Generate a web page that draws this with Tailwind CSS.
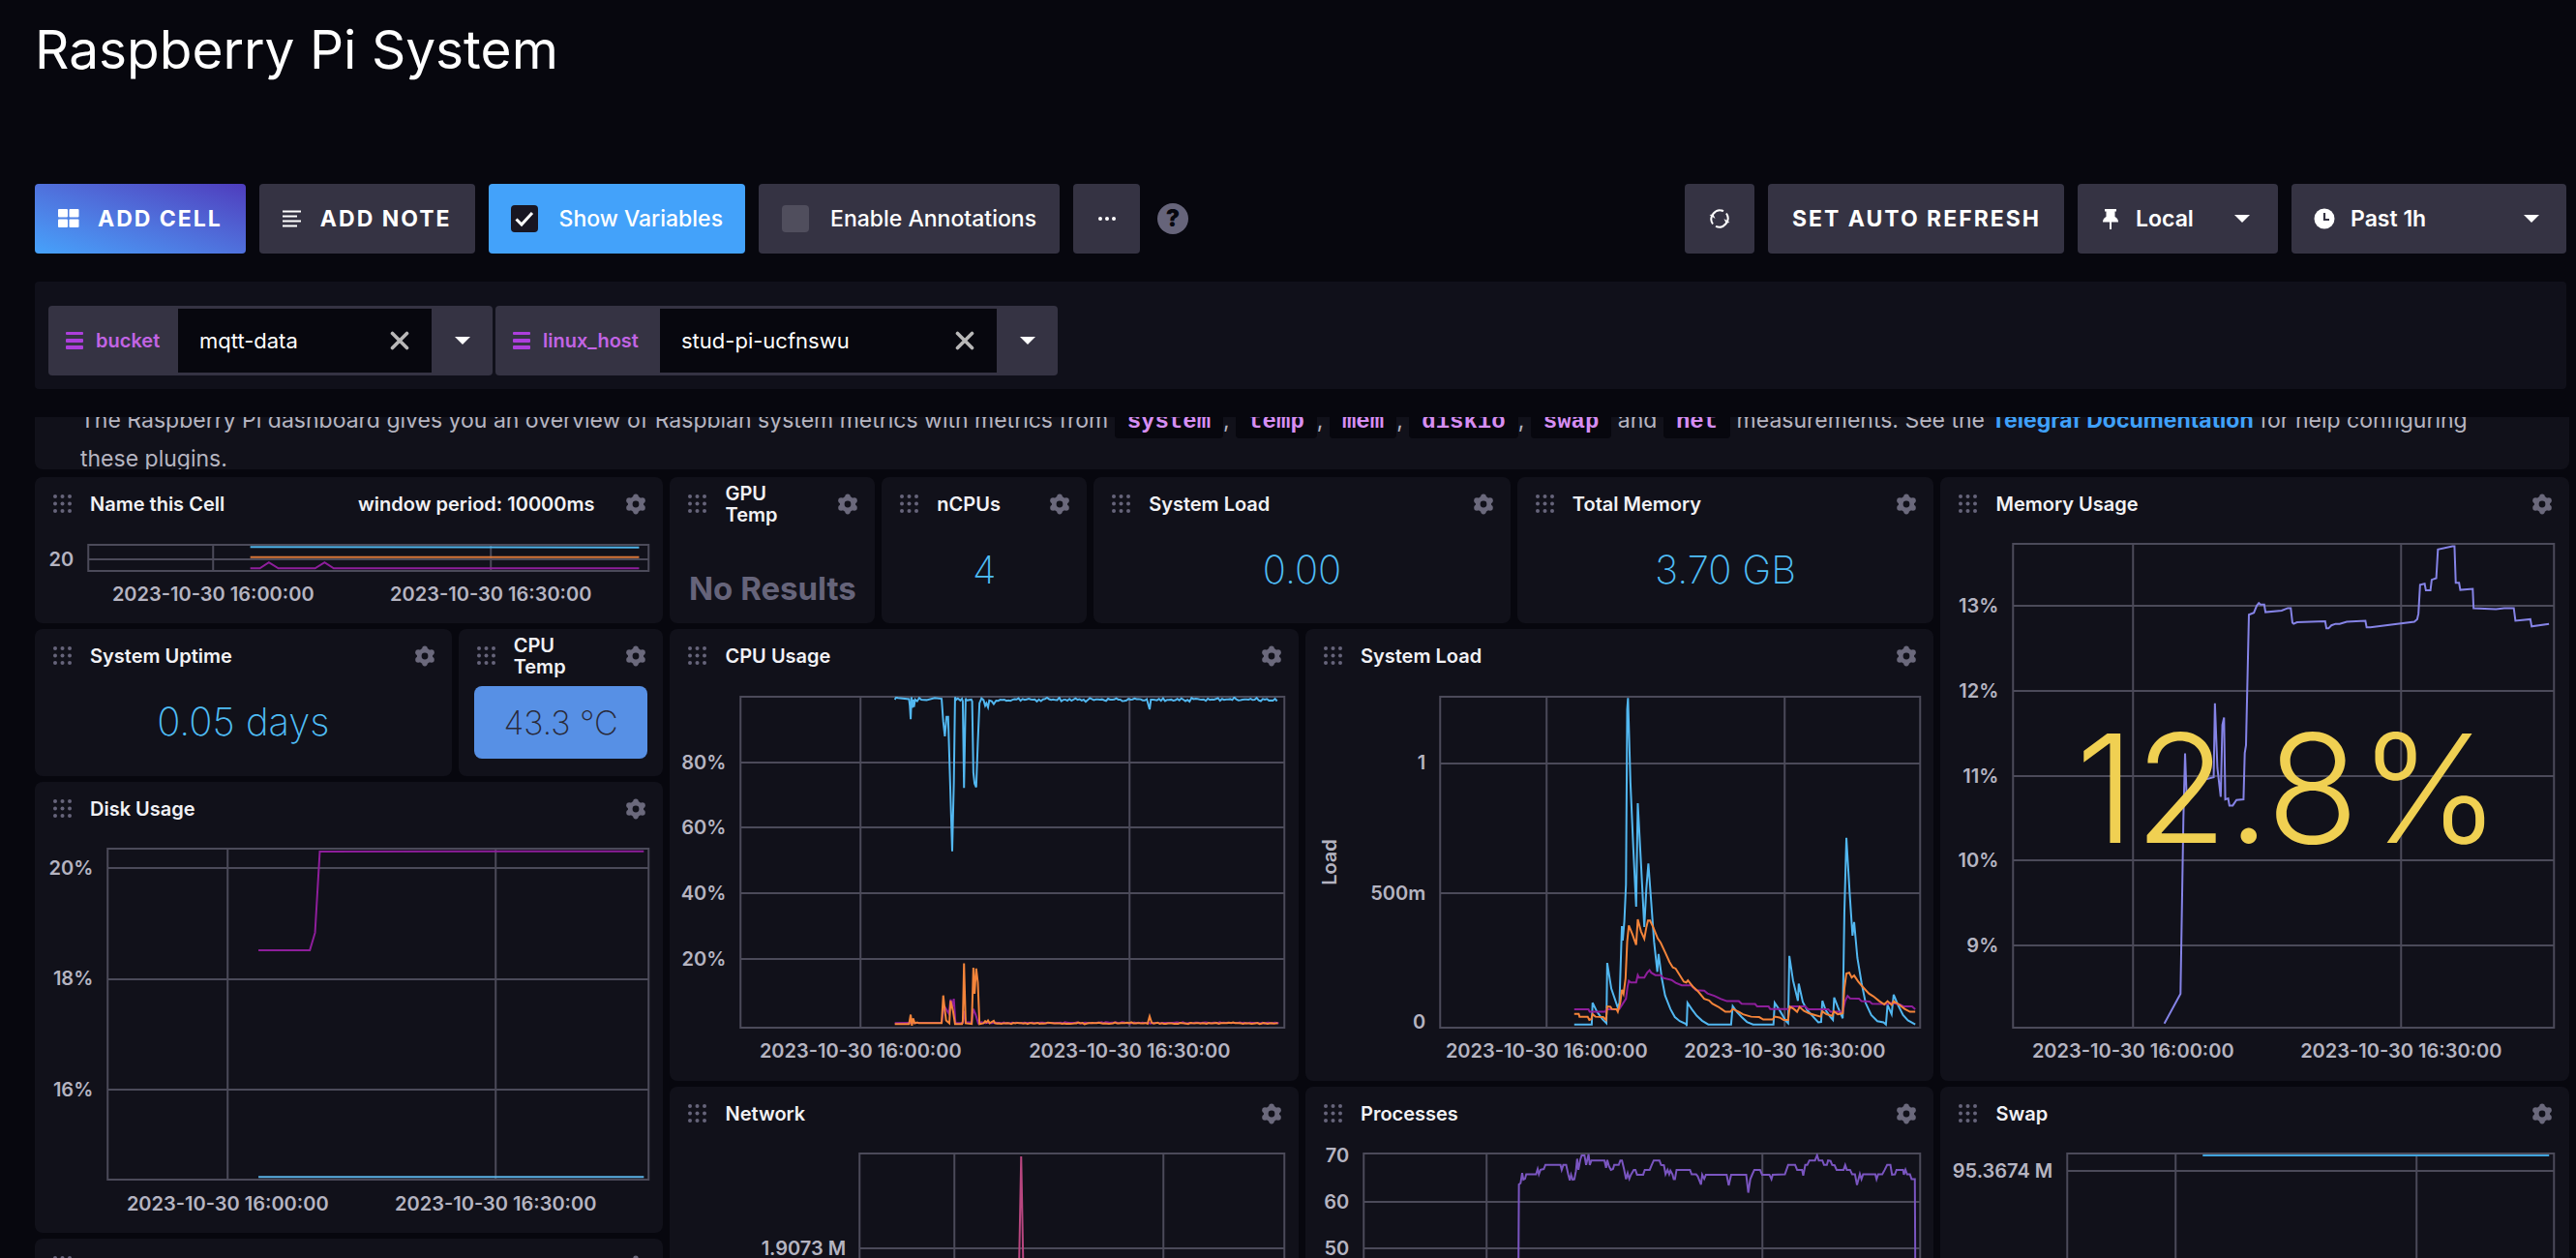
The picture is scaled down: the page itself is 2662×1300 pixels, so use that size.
<!DOCTYPE html>
<html lang="en">
<head>
<meta charset="utf-8">
<title>Raspberry Pi System</title>
<script src="https://cdn.jsdelivr.net/npm/@tailwindcss/browser@4"></script>
</head>
<body class="flex h-screen flex-col overflow-hidden bg-[#07070e] font-['Inter',sans-serif] text-white">

<svg class="hidden" aria-hidden="true">
  <symbol id="dots" viewBox="0 0 19 19">
    <g fill="#66647a"><circle cx="2" cy="2" r="2"/><circle cx="9.5" cy="2" r="2"/><circle cx="17" cy="2" r="2"/><circle cx="2" cy="9.5" r="2"/><circle cx="9.5" cy="9.5" r="2"/><circle cx="17" cy="9.5" r="2"/><circle cx="2" cy="17" r="2"/><circle cx="9.5" cy="17" r="2"/><circle cx="17" cy="17" r="2"/></g>
  </symbol>
  <symbol id="gear" viewBox="0 0 22 22">
    <g fill="#6b697c"><circle cx="11" cy="11" r="8.2"/><circle cx="11" cy="3.4" r="2.8"/><circle cx="11" cy="18.6" r="2.8"/><circle cx="4.2" cy="7.2" r="3"/><circle cx="17.8" cy="7.2" r="3"/><circle cx="4.2" cy="14.8" r="3"/><circle cx="17.8" cy="14.8" r="3"/></g>
    <circle cx="11" cy="11" r="3.4" fill="#11111a"/>
  </symbol>
  <symbol id="caret" viewBox="0 0 16 8"><path d="M0 0H16L8 8Z" fill="#fff"/></symbol>
  <symbol id="bars" viewBox="0 0 18 18"><g fill="#ad3fdc"><rect width="18" height="3" rx="1"/><rect y="7" width="18" height="4" rx="1"/><rect y="14" width="18" height="4" rx="1"/></g></symbol>
  <symbol id="cross" viewBox="0 0 20 20"><path d="M2.5 2.5L17.5 17.5M17.5 2.5L2.5 17.5" stroke="#b9b8b8" stroke-width="3.6" stroke-linecap="round"/></symbol>
</svg>

<header class="flex h-[190px] shrink-0 items-start px-9 pt-[17px]">
  <h1 class="text-[55px] leading-[68px]">Raspberry Pi System</h1>
</header>

<div class="flex shrink-0 items-center justify-between pl-9 pr-[10px] text-[23px]">
  <div class="flex items-center gap-[14px]">
    <button class="flex h-[72px] items-center gap-[19px] rounded bg-linear-to-tr from-[#45a2fb] to-[#4e3cbd] px-6 font-bold tracking-[2px]">
      <svg class="h-[20px] w-[22px]" viewBox="0 0 22 20" fill="#fff"><rect width="10" height="8.5" rx="1"/><rect x="11.5" width="10" height="8.5" rx="1"/><rect y="10.5" width="10" height="8.5" rx="1"/><rect x="11.5" y="10.5" width="10" height="8.5" rx="1"/></svg>ADD CELL
    </button>
    <button class="flex h-[72px] items-center gap-[20px] rounded bg-[#353343] px-6 font-bold tracking-[2px]">
      <svg class="h-[18px] w-[19px]" viewBox="0 0 19 18" stroke="#fff" stroke-width="2"><path d="M0 1.5H19M0 6.5H15M0 11.5H19M0 16.5H15"/></svg>ADD NOTE
    </button>
    <label class="flex h-[72px] items-center gap-[22px] rounded bg-[#43a2fa] px-[23px] font-medium">
      <span class="grid size-[28px] place-items-center">
        <input type="checkbox" checked class="size-[28px] appearance-none rounded bg-[#181622] [grid-area:1/1]">
        <svg class="pointer-events-none size-[20px] [grid-area:1/1]" viewBox="0 0 20 20" fill="none" stroke="#fff" stroke-width="3"><path d="M1.5 10.5L7 16L18 4"/></svg>
      </span>Show Variables
    </label>
    <label class="flex h-[72px] items-center gap-[22px] rounded bg-[#353343] px-6 font-medium">
      <input type="checkbox" class="size-[28px] appearance-none rounded bg-[#504e5d]">Enable Annotations
    </label>
    <button class="grid h-[72px] w-[69px] place-items-center rounded bg-[#353343]" aria-label="More">
      <svg class="h-[4px] w-[18px]" viewBox="0 0 18 4" fill="#fff"><circle cx="2" cy="2" r="2"/><circle cx="9" cy="2" r="2"/><circle cx="16" cy="2" r="2"/></svg>
    </button>
    <button class="ml-1 grid size-[32px] place-items-center rounded-full bg-[#66647a] text-[24px] leading-none font-black text-[#07070e]">?</button>
  </div>
  <div class="flex items-center gap-[14px]">
    <button class="grid size-[72px] place-items-center rounded bg-[#353343]" aria-label="Refresh">
      <svg class="size-[22px]" viewBox="0 0 22 22" fill="none" stroke="#fff" stroke-width="2"><path d="M4 16.500A9 9 0 0 1 15 3.200M18 5.500A9 9 0 0 1 7 18.800"/><path fill="#fff" stroke="none" d="M0.500 7L4.500 6.500L6.500 11Z M21.500 15L17.500 15.500L15.500 11Z"/></svg>
    </button>
    <button class="h-[72px] rounded bg-[#353343] pl-[25px] pr-[24px] font-bold tracking-[2px]">SET AUTO REFRESH</button>
    <div class="relative">
      <select aria-label="Time zone" class="h-[72px] w-[207px] appearance-none rounded bg-[#353343] pl-[60px] font-semibold"><option>Local</option></select>
      <svg class="pointer-events-none absolute top-[26px] left-[26px] h-[21px] w-[16px]" viewBox="0 0 16 21" fill="#fff"><path d="M2 0H14V2.5H12.5V8Q16 9.5 16 13.5H0Q0 9.5 3.5 8V2.5H2Z"/><rect x="7" y="13" width="2" height="8"/></svg>
      <svg class="pointer-events-none absolute top-[32px] right-[29px] h-[8px] w-[16px]"><use href="#caret"/></svg>
    </div>
    <div class="relative">
      <select aria-label="Time range" class="h-[72px] w-[284px] appearance-none rounded bg-[#353343] pl-[61px] font-semibold"><option>Past 1h</option></select>
      <svg class="pointer-events-none absolute top-[25px] left-[23px] size-[22px]" viewBox="0 0 22 22"><circle cx="11" cy="11" r="10.5" fill="#fff"/><path d="M11 5V12H16" fill="none" stroke="#353343" stroke-width="2.2"/></svg>
      <svg class="pointer-events-none absolute top-[32px] right-[28px] h-[8px] w-[16px]"><use href="#caret"/></svg>
    </div>
  </div>
</div>

<div class="mt-[29px] mr-[10px] ml-9 flex h-[111px] shrink-0 gap-[3px] rounded bg-[#10101a] pt-[25px] pl-[14px]">
  <div class="flex h-[72px] w-[459px] items-center rounded bg-[#353343]">
    <label for="bucket" class="flex w-[134px] items-center gap-[13px] pl-[18px] text-[20px] font-semibold text-[#c264e4]"><svg class="size-[18px]"><use href="#bars"/></svg>bucket</label>
    <div class="flex h-[66px] flex-1 items-center bg-[#07070e] pr-[23px] pl-[22px]">
      <input id="bucket" value="mqtt-data" class="w-0 flex-1 text-[22px] outline-none">
      <button aria-label="Clear bucket"><svg class="size-[20px]"><use href="#cross"/></svg></button>
    </div>
    <button class="grid h-full w-[63px] place-items-center" aria-label="Open bucket list"><svg class="h-[8px] w-[16px]"><use href="#caret"/></svg></button>
  </div>
  <div class="flex h-[72px] w-[581px] items-center rounded bg-[#353343]">
    <label for="host" class="flex w-[170px] items-center gap-[13px] pl-[18px] text-[20px] font-semibold text-[#c264e4]"><svg class="size-[18px]"><use href="#bars"/></svg>linux_host</label>
    <div class="flex h-[66px] flex-1 items-center bg-[#07070e] pr-[23px] pl-[22px]">
      <input id="host" value="stud-pi-ucfnswu" class="w-0 flex-1 text-[22px] outline-none">
      <button aria-label="Clear host"><svg class="size-[20px]"><use href="#cross"/></svg></button>
    </div>
    <button class="grid h-full w-[63px] place-items-center" aria-label="Open host list"><svg class="h-[8px] w-[16px]"><use href="#caret"/></svg></button>
  </div>
</div>

<main class="mt-[29px] min-h-0 flex-1 overflow-hidden pr-[7px] pl-9">
  <section class="flex h-[54px] flex-col justify-end overflow-hidden rounded-b-lg bg-[#11111a] px-[47px]">
    <p class="-mb-[8px] text-[23px] leading-[38px] text-[#b6b5c1]">The Raspberry Pi dashboard gives you an overview of Raspbian system metrics with metrics from <code class="rounded-sm bg-[#07070e] px-[13px] py-1 font-['Liberation_Mono',monospace] text-[24px] font-bold text-[#d68ef2]">system</code>, <code class="rounded-sm bg-[#07070e] px-[13px] py-1 font-['Liberation_Mono',monospace] text-[24px] font-bold text-[#d68ef2]">temp</code>, <code class="rounded-sm bg-[#07070e] px-[13px] py-1 font-['Liberation_Mono',monospace] text-[24px] font-bold text-[#d68ef2]">mem</code>, <code class="rounded-sm bg-[#07070e] px-[13px] py-1 font-['Liberation_Mono',monospace] text-[24px] font-bold text-[#d68ef2]">diskio</code>, <code class="rounded-sm bg-[#07070e] px-[13px] py-1 font-['Liberation_Mono',monospace] text-[24px] font-bold text-[#d68ef2]">swap</code> and <code class="rounded-sm bg-[#07070e] px-[13px] py-1 font-['Liberation_Mono',monospace] text-[24px] font-bold text-[#d68ef2]">net</code> measurements. See the <a href="#" class="font-bold text-[#3fa1fa]">Telegraf Documentation</a> for help configuring these plugins.</p>
  </section>

  <div class="mt-2 grid grid-cols-12 grid-rows-[151px_152px_151px_152px_151px_151px_151px] gap-x-[7px] gap-y-[6px] text-[20px] leading-[22px] font-semibold text-[#f1f1f5]">

    <section class="col-span-3 col-start-1 row-start-1 grid rounded-lg bg-[#11111a]">
      <div class="flex h-[55px] items-center gap-[19px] pr-[17px] pl-[19px] [grid-area:1/1]"><svg class="size-[19px]"><use href="#dots"/></svg><h2 class="flex-1">Name this Cell</h2><span class="mr-[13px]">window period: 10000ms</span><button aria-label="Configure"><svg class="size-[22px]"><use href="#gear"/></svg></button></div>
      <svg class="h-full w-full [grid-area:1/1]" viewBox="0 0 649 151" preserveAspectRatio="xMidYMin meet" fill="#b5b4c1">
        <path class="fill-none stroke-[#4b4a59] stroke-2" d="M55 70H634V97H55ZM184 70V97M471 70V97M55 85H634"/>
        <svg x="55" y="70" width="579" height="27" viewBox="205 488 1297 82" preserveAspectRatio="none" fill="none" stroke-width="2">
          <path vector-effect="non-scaling-stroke" stroke="#4fb3e8" d="M580 495L1480 496"/>
          <path vector-effect="non-scaling-stroke" stroke="#d9773a" d="M580 527H1480"/>
          <path vector-effect="non-scaling-stroke" stroke="#8e1e9b" d="M580 562H602L623 543L645 562H730L752 543L773 562H1480"/>
        </svg>
        <text x="40" y="92" text-anchor="end">20</text>
        <text x="184" y="128" text-anchor="middle">2023-10-30 16:00:00</text><text x="471" y="128" text-anchor="middle">2023-10-30 16:30:00</text>
      </svg>
    </section>

    <section class="col-span-1 col-start-4 row-start-1 flex flex-col rounded-lg bg-[#11111a]">
      <div class="flex h-[55px] shrink-0 items-center gap-[19px] pr-[17px] pl-[19px]"><svg class="size-[19px]"><use href="#dots"/></svg><h2 class="flex-1">GPU<br>Temp</h2><button aria-label="Configure"><svg class="size-[22px]"><use href="#gear"/></svg></button></div>
      <p class="mt-[40px] text-center text-[33px] leading-[40px] font-bold whitespace-nowrap text-[#66647a]">No Results</p>
    </section>

    <section class="col-span-1 col-start-5 row-start-1 flex flex-col rounded-lg bg-[#11111a]">
      <div class="flex h-[55px] shrink-0 items-center gap-[19px] pr-[17px] pl-[19px]"><svg class="size-[19px]"><use href="#dots"/></svg><h2 class="flex-1">nCPUs</h2><button aria-label="Configure"><svg class="size-[22px]"><use href="#gear"/></svg></button></div>
      <p class="mt-[16px] text-center text-[40px] leading-[50px] font-extralight text-[#4fbdf5]">4</p>
    </section>

    <section class="col-span-2 col-start-6 row-start-1 flex flex-col rounded-lg bg-[#11111a]">
      <div class="flex h-[55px] shrink-0 items-center gap-[19px] pr-[17px] pl-[19px]"><svg class="size-[19px]"><use href="#dots"/></svg><h2 class="flex-1">System Load</h2><button aria-label="Configure"><svg class="size-[22px]"><use href="#gear"/></svg></button></div>
      <p class="mt-[16px] text-center text-[40px] leading-[50px] font-extralight text-[#4fbdf5]">0.00</p>
    </section>

    <section class="col-span-2 col-start-8 row-start-1 flex flex-col rounded-lg bg-[#11111a]">
      <div class="flex h-[55px] shrink-0 items-center gap-[19px] pr-[17px] pl-[19px]"><svg class="size-[19px]"><use href="#dots"/></svg><h2 class="flex-1">Total Memory</h2><button aria-label="Configure"><svg class="size-[22px]"><use href="#gear"/></svg></button></div>
      <p class="mt-[16px] text-center text-[40px] leading-[50px] font-extralight text-[#4fbdf5]">3.70 GB</p>
    </section>

    <section class="col-span-3 col-start-10 row-span-4 row-start-1 grid rounded-lg bg-[#11111a]">
      <div class="flex h-[55px] items-center gap-[19px] pr-[17px] pl-[19px] [grid-area:1/1]"><svg class="size-[19px]"><use href="#dots"/></svg><h2 class="flex-1">Memory Usage</h2><button aria-label="Configure"><svg class="size-[22px]"><use href="#gear"/></svg></button></div>
      <svg class="h-full w-full [grid-area:1/1]" viewBox="0 0 649 624" preserveAspectRatio="xMidYMin meet" fill="#b5b4c1">
        <path class="fill-none stroke-[#4b4a59] stroke-2" d="M75 69H634V569H75ZM199 69V569M476 69V569M75 133H634M75 221H634M75 309H634M75 396H634M75 484H634"/>
        <svg x="75" y="69" width="559" height="500" viewBox="210 157 1305 956" preserveAspectRatio="none" fill="none" stroke="#8583e6" stroke-width="2">
          <path vector-effect="non-scaling-stroke" d="M575 1105L614 1046L621 700L625 571L629 660L638 645L650 629L665 624L680 621L694 618L697 472L703 600L711 657L715 515L719 500L722 662L729 660L732 674H740L749 663L766 662L769 570L772 555L779 297L791 293L798 279L803 274L807 277H816L819 292L858 289L873 284H880L884 313L887 315L895 312L963 310L966 324H971L978 318L988 315H998L1015 311L1060 309L1063 322H1072L1178 311L1185 306L1188 295L1192 238L1203 236L1206 249H1217L1220 228L1231 225L1235 168L1270 162H1275L1278 234H1286L1289 248L1319 246L1321 284L1375 286L1395 284H1418L1422 309L1458 306L1461 320L1503 315"/>
        </svg>
        <g text-anchor="end"><text x="60" y="140">13%</text><text x="60" y="228">12%</text><text x="60" y="316">11%</text><text x="60" y="403">10%</text><text x="60" y="491">9%</text></g>
        <text x="199" y="600" text-anchor="middle">2023-10-30 16:00:00</text><text x="476" y="600" text-anchor="middle">2023-10-30 16:30:00</text>
        <text x="359" y="378" text-anchor="middle" class="fill-[#f0d052] text-[156px] font-light">12.8%</text>
      </svg>
    </section>

    <section class="col-span-2 col-start-1 row-start-2 flex flex-col rounded-lg bg-[#11111a]">
      <div class="flex h-[55px] shrink-0 items-center gap-[19px] pr-[17px] pl-[19px]"><svg class="size-[19px]"><use href="#dots"/></svg><h2 class="flex-1">System Uptime</h2><button aria-label="Configure"><svg class="size-[22px]"><use href="#gear"/></svg></button></div>
      <p class="mt-[16px] text-center text-[40px] leading-[50px] font-extralight text-[#4fbdf5]">0.05 days</p>
    </section>

    <section class="col-span-1 col-start-3 row-start-2 flex flex-col rounded-lg bg-[#11111a]">
      <div class="flex h-[55px] shrink-0 items-center gap-[19px] pr-[17px] pl-[19px]"><svg class="size-[19px]"><use href="#dots"/></svg><h2 class="flex-1">CPU<br>Temp</h2><button aria-label="Configure"><svg class="size-[22px]"><use href="#gear"/></svg></button></div>
      <p class="mx-4 mt-1 h-[75px] rounded-lg bg-[#5790e5] text-center text-[34px] leading-[75px] font-extralight whitespace-nowrap text-[#292938]">43.3 °C</p>
    </section>

    <section class="col-span-3 col-start-1 row-span-3 row-start-3 grid rounded-lg bg-[#11111a]">
      <div class="flex h-[55px] items-center gap-[19px] pr-[17px] pl-[19px] [grid-area:1/1]"><svg class="size-[19px]"><use href="#dots"/></svg><h2 class="flex-1">Disk Usage</h2><button aria-label="Configure"><svg class="size-[22px]"><use href="#gear"/></svg></button></div>
      <svg class="h-full w-full [grid-area:1/1]" viewBox="0 0 649 466" preserveAspectRatio="xMidYMin meet" fill="#b5b4c1">
        <path class="fill-none stroke-[#4b4a59] stroke-2" d="M75 69H634V411H75ZM199 69V411M476 69V411M75 89H634M75 204H634M75 318H634"/>
        <svg x="75" y="69" width="559" height="342" viewBox="249 232 1252 1027" preserveAspectRatio="none" fill="none" stroke-width="2">
          <path vector-effect="non-scaling-stroke" stroke="#8e1e9b" d="M598 547H717L729 493L740 241L1490 240"/>
          <path vector-effect="non-scaling-stroke" stroke="#5bb2e6" d="M598 1251H1490"/>
        </svg>
        <g text-anchor="end"><text x="60" y="96">20%</text><text x="60" y="210">18%</text><text x="60" y="325">16%</text></g>
        <text x="199" y="443" text-anchor="middle">2023-10-30 16:00:00</text><text x="476" y="443" text-anchor="middle">2023-10-30 16:30:00</text>
      </svg>
    </section>

    <section class="col-span-3 col-start-4 row-span-3 row-start-2 grid rounded-lg bg-[#11111a]">
      <div class="flex h-[55px] items-center gap-[19px] pr-[17px] pl-[19px] [grid-area:1/1]"><svg class="size-[19px]"><use href="#dots"/></svg><h2 class="flex-1">CPU Usage</h2><button aria-label="Configure"><svg class="size-[22px]"><use href="#gear"/></svg></button></div>
      <svg class="h-full w-full [grid-area:1/1]" viewBox="0 0 649 467" preserveAspectRatio="xMidYMin meet" fill="#b5b4c1">
        <path class="fill-none stroke-[#4b4a59] stroke-2" d="M73 70H635V412H73ZM197 70V412M475 70V412M73 138H635M73 205H635M73 273H635M73 341H635"/>
        <svg x="73" y="70" width="562" height="342" viewBox="178 189 1336 812" preserveAspectRatio="none" fill="none" stroke-width="2">
          <polyline vector-effect="non-scaling-stroke" stroke="#8e1e9b" data-from="770" data-base="989" data-amp="2" points="557,990 592,989 672,989 676,960 680,950 690,967 694,932 699,945 702,930 706,990 724,989 727,960 731,988 746,988 750,955 756,970 762,990"/>
          <polyline vector-effect="non-scaling-stroke" stroke="#f4843a" data-from="808" data-base="990" data-amp="3" data-dip="1183,973" points="557,992 592,992 596,969 599,996 602,978 606,990 612,988 616,990 672,990 676,922 679,950 683,983 691,990 694,935 700,960 705,992 722,992 724,985 727,843 731,990 746,992 750,854 753,918 757,856 761,890 765,992 775,990 779,985 782,988 786,983 790,990 800,984 803,990"/>
          <polyline vector-effect="non-scaling-stroke" stroke="#52b7f0" data-from="806" data-base="196" data-amp="6" data-dip="1183,220" points="557,196 560,191 565,192 592,195 594,212 596,244 598,190 600,216 602,196 604,214 607,196 612,200 617,192 622,196 635,197 655,192 672,194 676,250 680,286 684,238 688,238 698,568 702,400 705,190 708,196 712,193 718,198 722,194 724,200 727,413 731,193 733,198 745,196 747,200 750,375 753,402 757,411 761,300 765,205 770,193 775,197 779,211 782,205 786,215 789,198 795,200 800,207"/>
        </svg>
        <g text-anchor="end"><text x="58" y="145">80%</text><text x="58" y="212">60%</text><text x="58" y="280">40%</text><text x="58" y="348">20%</text></g>
        <text x="197" y="443" text-anchor="middle">2023-10-30 16:00:00</text><text x="475" y="443" text-anchor="middle">2023-10-30 16:30:00</text>
      </svg>
    </section>

    <section class="col-span-3 col-start-7 row-span-3 row-start-2 grid rounded-lg bg-[#11111a]">
      <div class="flex h-[55px] items-center gap-[19px] pr-[17px] pl-[19px] [grid-area:1/1]"><svg class="size-[19px]"><use href="#dots"/></svg><h2 class="flex-1">System Load</h2><button aria-label="Configure"><svg class="size-[22px]"><use href="#gear"/></svg></button></div>
      <svg class="h-full w-full [grid-area:1/1]" viewBox="0 0 649 467" preserveAspectRatio="xMidYMin meet" fill="#b5b4c1">
        <path class="fill-none stroke-[#4b4a59] stroke-2" d="M139 70H635V412H139ZM249 70V412M495 70V412M139 139H635M139 273H635"/>
        <svg x="139" y="70" width="496" height="342" viewBox="352 189 1178 812" preserveAspectRatio="none" fill="none" stroke-width="2">
          <polyline vector-effect="non-scaling-stroke" stroke="#52b7f0" points="681,993 724,993 726,940 737,962 750,980 760,990 762,842 772,905 788,952 792,940 798,752 800,787 804,740 808,650 811,220 813,192 819,400 826,560 833,704 837,450 845,600 853,754 858,660 863,598 869,680 877,790 885,864 888,820 896,880 904,922 917,955 928,975 940,985 956,992 957,997 959,940 970,956 982,972 995,984 1010,993 1066,993 1070,948 1080,962 1092,975 1105,987 1120,993 1170,993 1173,940 1185,958 1200,984 1206,990 1209,825 1218,885 1230,935 1232,893 1242,938 1252,957 1270,977 1280,988 1287,987 1290,935 1298,958 1310,975 1316,982 1319,927 1328,950 1340,978 1344,720 1349,535 1357,670 1364,775 1368,742 1376,830 1386,890 1396,940 1410,970 1425,985 1440,988 1446,993 1450,945 1460,968 1465,920 1475,944 1488,970 1500,983 1518,993"/>
          <polyline vector-effect="non-scaling-stroke" stroke="#8e1e9b" points="681,956 716,956 719,962 757,962 760,956 786,956 792,955 808,930 812,900 815,886 820,890 833,890 837,872 840,878 853,878 860,866 866,860 870,866 880,872 893,872 900,879 920,884 930,891 945,897 968,897 980,909 1000,910 1008,917 1025,923 1040,930 1056,936 1085,936 1092,942 1125,943 1130,949 1158,949 1162,955 1210,955 1215,949 1248,949 1255,956 1305,956 1310,962 1340,962 1346,935 1352,923 1358,929 1380,930 1386,936 1406,937 1412,942 1450,943 1460,940 1480,944 1490,949 1510,949 1518,956"/>
          <polyline vector-effect="non-scaling-stroke" stroke="#f4843a" points="681,967 692,967 694,974 714,974 718,982 723,980 726,968 733,974 752,975 759,982 762,949 770,950 773,955 785,956 788,962 794,940 798,908 802,918 807,880 811,790 815,750 824,772 833,798 837,735 845,765 853,783 858,755 862,738 867,738 875,755 886,782 893,792 905,818 915,840 923,853 930,856 940,872 950,888 956,890 960,885 972,900 985,912 1000,930 1012,934 1020,942 1035,950 1052,962 1064,962 1070,955 1085,962 1095,968 1115,974 1135,975 1145,981 1168,981 1173,974 1185,976 1195,982 1206,982 1210,949 1220,955 1228,962 1234,950 1245,960 1258,966 1272,970 1286,974 1290,961 1300,968 1314,972 1318,961 1328,968 1340,966 1344,905 1349,868 1356,866 1362,878 1368,873 1378,888 1390,902 1404,917 1415,924 1430,936 1442,944 1450,936 1460,945 1465,936 1478,944 1492,955 1505,962 1518,962"/>
        </svg>
        <g text-anchor="end"><text x="124" y="145">1</text><text x="124" y="280">500m</text><text x="124" y="413">0</text></g>
        <text x="249" y="443" text-anchor="middle">2023-10-30 16:00:00</text><text x="495" y="443" text-anchor="middle">2023-10-30 16:30:00</text>
        <text transform="translate(32 241) rotate(-90)" text-anchor="middle">Load</text>
      </svg>
    </section>

    <section class="col-span-3 col-start-4 row-span-3 row-start-5 grid rounded-lg bg-[#11111a]">
      <div class="flex h-[55px] items-center gap-[19px] pr-[17px] pl-[19px] [grid-area:1/1]"><svg class="size-[19px]"><use href="#dots"/></svg><h2 class="flex-1">Network</h2><button aria-label="Configure"><svg class="size-[22px]"><use href="#gear"/></svg></button></div>
      <svg class="h-full w-full [grid-area:1/1]" viewBox="0 0 649 465" preserveAspectRatio="xMidYMin meet" fill="#b5b4c1">
        <path class="fill-none stroke-[#4b4a59] stroke-2" d="M196 69H635V411H196ZM294 69V411M510 69V411M196 167H635"/>
        <path class="fill-none stroke-[#b8467f] stroke-2" d="M361 177L363 72L365 177"/>
        <text x="182" y="174" text-anchor="end">1.9073 M</text>
      </svg>
    </section>

    <section class="col-span-3 col-start-7 row-span-3 row-start-5 grid rounded-lg bg-[#11111a]">
      <div class="flex h-[55px] items-center gap-[19px] pr-[17px] pl-[19px] [grid-area:1/1]"><svg class="size-[19px]"><use href="#dots"/></svg><h2 class="flex-1">Processes</h2><button aria-label="Configure"><svg class="size-[22px]"><use href="#gear"/></svg></button></div>
      <svg class="h-full w-full [grid-area:1/1]" viewBox="0 0 649 465" preserveAspectRatio="xMidYMin meet" fill="#b5b4c1">
        <path class="fill-none stroke-[#4b4a59] stroke-2" d="M60 69H635V411H60ZM187 69V411M472 69V411M60 119H635M60 167H635"/>
        <svg x="60" y="69" width="575" height="108" viewBox="164 1312 1366 256" preserveAspectRatio="none" fill="none" stroke="#7a55c0" stroke-width="2">
          <polyline vector-effect="non-scaling-stroke" points="544,1568 545,1388 549,1385 553,1360 556,1376 560,1374 563,1363 587,1363 591,1350 594,1363 598,1352 606,1350 610,1340 647,1340 650,1352 654,1340 661,1340 666,1363 670,1378 673,1364 677,1376 681,1375 685,1355 688,1325 691,1352 696,1326 699,1317 706,1317 710,1340 716,1314 719,1340 723,1329 755,1329 759,1347 762,1328 766,1343 771,1352 776,1350 779,1340 790,1340 794,1329 798,1329 803,1350 808,1375 812,1360 816,1374 820,1364 827,1352 831,1352 835,1364 850,1364 854,1352 866,1352 871,1340 876,1329 890,1329 894,1340 901,1341 905,1363 910,1352 914,1363 917,1354 922,1363 925,1375 928,1375 932,1352 965,1352 969,1363 980,1363 984,1368 992,1388 995,1364 1000,1374 1004,1364 1055,1364 1060,1390 1066,1364 1103,1364 1108,1408 1113,1375 1118,1363 1123,1352 1137,1352 1142,1364 1160,1364 1165,1375 1168,1364 1198,1363 1206,1340 1223,1340 1228,1352 1240,1352 1243,1366 1248,1340 1253,1340 1258,1329 1272,1329 1277,1316 1281,1329 1290,1329 1294,1340 1301,1340 1304,1329 1310,1330 1314,1340 1320,1341 1325,1352 1342,1352 1346,1340 1350,1352 1358,1352 1363,1363 1370,1363 1375,1389 1382,1362 1386,1375 1390,1363 1420,1363 1423,1375 1427,1363 1437,1363 1443,1352 1449,1340 1457,1340 1461,1364 1468,1363 1472,1352 1488,1352 1490,1364 1494,1352 1498,1363 1505,1363 1509,1375 1517,1375 1518,1568"/>
        </svg>
        <g text-anchor="end"><text x="45" y="78">70</text><text x="45" y="126">60</text><text x="45" y="174">50</text></g>
      </svg>
    </section>

    <section class="col-span-3 col-start-10 row-span-3 row-start-5 grid rounded-lg bg-[#11111a]">
      <div class="flex h-[55px] items-center gap-[19px] pr-[17px] pl-[19px] [grid-area:1/1]"><svg class="size-[19px]"><use href="#dots"/></svg><h2 class="flex-1">Swap</h2><button aria-label="Configure"><svg class="size-[22px]"><use href="#gear"/></svg></button></div>
      <svg class="h-full w-full [grid-area:1/1]" viewBox="0 0 649 465" preserveAspectRatio="xMidYMin meet" fill="#b5b4c1">
        <path class="fill-none stroke-[#4b4a59] stroke-2" d="M131 69H634V411H131ZM243 69V411M492 69V411M131 87H634"/>
        <path class="fill-none stroke-[#3fa3dc] stroke-2" d="M271 71H629"/>
        <text x="116" y="94" text-anchor="end">95.3674 M</text>
      </svg>
    </section>

    <section class="col-span-3 col-start-1 row-span-2 row-start-6 rounded-lg bg-[#11111a]">
      <div class="flex h-[55px] items-center gap-[19px] pr-[17px] pl-[19px]"><svg class="size-[19px]"><use href="#dots"/></svg><h2 class="flex-1">Disk IO</h2><button aria-label="Configure"><svg class="size-[22px]"><use href="#gear"/></svg></button></div>
    </section>
  </div>
</main>

<script>
  // Extend the steady part of each CPU series with small load jitter.
  let seed = 7;
  const rnd = () => (seed = (seed * 16807) % 2147483647) / 2147483647;
  for (const line of document.querySelectorAll('polyline[data-from]')) {
    const { from, base, amp, dip } = line.dataset;
    const [dx, dy] = (dip || '0,0').split(',').map(Number);
    let pts = line.getAttribute('points');
    for (let x = +from; x <= 1500; x += 5) {
      if (Math.abs(x - dx) < 3) pts += ` ${dx},${dy}`;
      else pts += ` ${x},${(+base + (rnd() * 2 - 1) * amp * rnd()).toFixed(1)}`;
    }
    line.setAttribute('points', pts);
  }
</script>
</body>
</html>
